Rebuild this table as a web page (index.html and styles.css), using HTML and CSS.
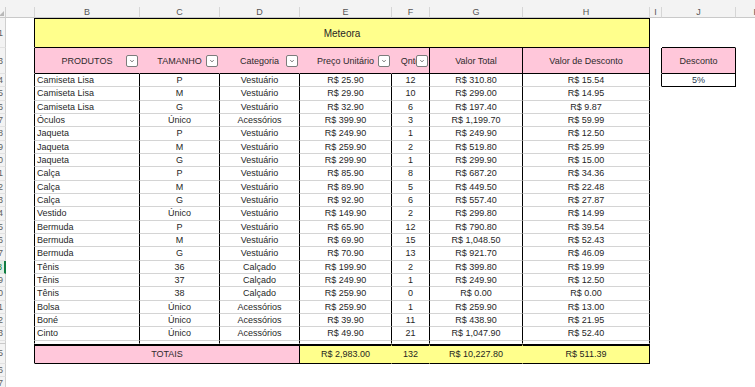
FILE: index.html
```html
<!DOCTYPE html>
<html lang="pt-BR">
<head>
<meta charset="utf-8">
<title>Meteora</title>
<link rel="stylesheet" href="styles.css">
</head>
<body>
<div class="sheet">
  <div class="topstrip"></div>
  <div class="row colhdr">
    <div class="corner"><span class="tri"></span></div>
    <div></div><div>B</div><div>C</div><div>D</div><div>E</div><div>F</div><div>G</div><div>H</div><div>I</div><div>J</div><div>K</div>
  </div>

  <div class="row r1">
    <div class="rh">1</div>
    <div class="a"></div>
    <div class="title">Meteora</div>
    <div></div>
    <div class="jtop"></div>
    <div></div>
  </div>

  <div class="row r3">
    <div class="rh">3</div>
    <div class="a"></div>
    <div class="hd fh"><span class="lbl">PRODUTOS</span><span class="flt"><svg viewBox="0 0 12 12" width="12" height="12"><path d="M4 5 L6 7 L8 5" fill="none" stroke="#505050" stroke-width="1"/></svg></span></div>
    <div class="hd fh"><span class="lbl">TAMANHO</span><span class="flt"><svg viewBox="0 0 12 12" width="12" height="12"><path d="M4 5 L6 7 L8 5" fill="none" stroke="#505050" stroke-width="1"/></svg></span></div>
    <div class="hd fh"><span class="lbl">Categoria</span><span class="flt"><svg viewBox="0 0 12 12" width="12" height="12"><path d="M4 5 L6 7 L8 5" fill="none" stroke="#505050" stroke-width="1"/></svg></span></div>
    <div class="hd fh"><span class="lbl">Preço Unitário</span><span class="flt"><svg viewBox="0 0 12 12" width="12" height="12"><path d="M4 5 L6 7 L8 5" fill="none" stroke="#505050" stroke-width="1"/></svg></span></div>
    <div class="hd fh bl"><span class="lbl">Qntd</span><span class="flt"><svg viewBox="0 0 12 12" width="12" height="12"><path d="M4 5 L6 7 L8 5" fill="none" stroke="#505050" stroke-width="1"/></svg></span></div>
    <div class="hd bl">Valor Total</div>
    <div class="hd bl">Valor de Desconto</div>
    <div class="a"></div>
    <div class="hd bl">Desconto</div>
    <div></div>
  </div>

  <div class="row data"><div class="rh">4</div><div class="a"></div><div class="d t">Camiseta Lisa</div><div class="d">P</div><div class="d">Vestuário</div><div class="d">R$ 25.90</div><div class="d">12</div><div class="d">R$ 310.80</div><div class="d">R$ 15.54</div><div class="a"></div><div class="pct">5%</div><div></div></div>
  <div class="row data"><div class="rh">5</div><div class="a"></div><div class="d t">Camiseta Lisa</div><div class="d">M</div><div class="d">Vestuário</div><div class="d">R$ 29.90</div><div class="d">10</div><div class="d">R$ 299.00</div><div class="d">R$ 14.95</div><div></div><div></div><div></div></div>
  <div class="row data"><div class="rh">6</div><div class="a"></div><div class="d t">Camiseta Lisa</div><div class="d">G</div><div class="d">Vestuário</div><div class="d">R$ 32.90</div><div class="d">6</div><div class="d">R$ 197.40</div><div class="d">R$ 9.87</div><div></div><div></div><div></div></div>
  <div class="row data"><div class="rh">7</div><div class="a"></div><div class="d t">Óculos</div><div class="d">Único</div><div class="d">Acessórios</div><div class="d">R$ 399.90</div><div class="d">3</div><div class="d">R$ 1,199.70</div><div class="d">R$ 59.99</div><div></div><div></div><div></div></div>
  <div class="row data"><div class="rh">8</div><div class="a"></div><div class="d t">Jaqueta</div><div class="d">P</div><div class="d">Vestuário</div><div class="d">R$ 249.90</div><div class="d">1</div><div class="d">R$ 249.90</div><div class="d">R$ 12.50</div><div></div><div></div><div></div></div>
  <div class="row data"><div class="rh">9</div><div class="a"></div><div class="d t">Jaqueta</div><div class="d">M</div><div class="d">Vestuário</div><div class="d">R$ 259.90</div><div class="d">2</div><div class="d">R$ 519.80</div><div class="d">R$ 25.99</div><div></div><div></div><div></div></div>
  <div class="row data"><div class="rh">10</div><div class="a"></div><div class="d t">Jaqueta</div><div class="d">G</div><div class="d">Vestuário</div><div class="d">R$ 299.90</div><div class="d">1</div><div class="d">R$ 299.90</div><div class="d">R$ 15.00</div><div></div><div></div><div></div></div>
  <div class="row data"><div class="rh">11</div><div class="a"></div><div class="d t">Calça</div><div class="d">P</div><div class="d">Vestuário</div><div class="d">R$ 85.90</div><div class="d">8</div><div class="d">R$ 687.20</div><div class="d">R$ 34.36</div><div></div><div></div><div></div></div>
  <div class="row data"><div class="rh">12</div><div class="a"></div><div class="d t">Calça</div><div class="d">M</div><div class="d">Vestuário</div><div class="d">R$ 89.90</div><div class="d">5</div><div class="d">R$ 449.50</div><div class="d">R$ 22.48</div><div></div><div></div><div></div></div>
  <div class="row data"><div class="rh">13</div><div class="a"></div><div class="d t">Calça</div><div class="d">G</div><div class="d">Vestuário</div><div class="d">R$ 92.90</div><div class="d">6</div><div class="d">R$ 557.40</div><div class="d">R$ 27.87</div><div></div><div></div><div></div></div>
  <div class="row data"><div class="rh">14</div><div class="a"></div><div class="d t">Vestido</div><div class="d">Único</div><div class="d">Vestuário</div><div class="d">R$ 149.90</div><div class="d">2</div><div class="d">R$ 299.80</div><div class="d">R$ 14.99</div><div></div><div></div><div></div></div>
  <div class="row data"><div class="rh">15</div><div class="a"></div><div class="d t">Bermuda</div><div class="d">P</div><div class="d">Vestuário</div><div class="d">R$ 65.90</div><div class="d">12</div><div class="d">R$ 790.80</div><div class="d">R$ 39.54</div><div></div><div></div><div></div></div>
  <div class="row data"><div class="rh">16</div><div class="a"></div><div class="d t">Bermuda</div><div class="d">M</div><div class="d">Vestuário</div><div class="d">R$ 69.90</div><div class="d">15</div><div class="d">R$ 1,048.50</div><div class="d">R$ 52.43</div><div></div><div></div><div></div></div>
  <div class="row data"><div class="rh">17</div><div class="a"></div><div class="d t">Bermuda</div><div class="d">G</div><div class="d">Vestuário</div><div class="d">R$ 70.90</div><div class="d">13</div><div class="d">R$ 921.70</div><div class="d">R$ 46.09</div><div></div><div></div><div></div></div>
  <div class="row data"><div class="rh sel">18</div><div class="a"></div><div class="d t">Tênis</div><div class="d">36</div><div class="d">Calçado</div><div class="d">R$ 199.90</div><div class="d">2</div><div class="d">R$ 399.80</div><div class="d">R$ 19.99</div><div></div><div></div><div></div></div>
  <div class="row data"><div class="rh">19</div><div class="a"></div><div class="d t">Tênis</div><div class="d">37</div><div class="d">Calçado</div><div class="d">R$ 249.90</div><div class="d">1</div><div class="d">R$ 249.90</div><div class="d">R$ 12.50</div><div></div><div></div><div></div></div>
  <div class="row data"><div class="rh">20</div><div class="a"></div><div class="d t">Tênis</div><div class="d">38</div><div class="d">Calçado</div><div class="d">R$ 259.90</div><div class="d">0</div><div class="d">R$ 0.00</div><div class="d">R$ 0.00</div><div></div><div></div><div></div></div>
  <div class="row data"><div class="rh">21</div><div class="a"></div><div class="d t">Bolsa</div><div class="d">Único</div><div class="d">Acessórios</div><div class="d">R$ 259.90</div><div class="d">1</div><div class="d">R$ 259.90</div><div class="d">R$ 13.00</div><div></div><div></div><div></div></div>
  <div class="row data"><div class="rh">22</div><div class="a"></div><div class="d t">Boné</div><div class="d">Único</div><div class="d">Acessórios</div><div class="d">R$ 39.90</div><div class="d">11</div><div class="d">R$ 438.90</div><div class="d">R$ 21.95</div><div></div><div></div><div></div></div>
  <div class="row data"><div class="rh">23</div><div class="a"></div><div class="d t">Cinto</div><div class="d">Único</div><div class="d">Acessórios</div><div class="d">R$ 49.90</div><div class="d">21</div><div class="d">R$ 1,047.90</div><div class="d">R$ 52.40</div><div></div><div></div><div></div></div>

  <div class="row gap"><div class="rh"></div><div class="a"></div><div class="v"></div><div class="v"></div><div class="v"></div><div class="v"></div><div class="v"></div><div class="v"></div><div class="v"></div><div></div><div></div><div></div></div>

  <div class="row tot">
    <div class="rh">25</div>
    <div class="a"></div>
    <div class="totlbl">TOTAIS</div>
    <div class="ty">R$ 2,983.00</div>
    <div class="ty">132</div>
    <div class="ty">R$ 10,227.80</div>
    <div class="ty last">R$ 511.39</div>
    <div></div><div></div><div></div>
  </div>

  <div class="row data"><div class="rh">26</div><div></div><div></div><div></div><div></div><div></div><div></div><div></div><div></div><div></div><div></div><div></div></div>
  <div class="row data"><div class="rh">27</div><div></div><div></div><div></div><div></div><div></div><div></div><div></div><div></div><div></div><div></div><div></div></div>
</div>
</body>
</html>
```

FILE: styles.css
```css
html, body {
  margin: 0;
  padding: 0;
  background: #ffffff;
  overflow: hidden;
}
body {
  width: 755px;
  height: 387px;
  font-family: "Liberation Sans", Arial, sans-serif;
  font-size: 9px;
  color: #1f1f1f;
}
.sheet {
  width: 778px;
}
.topstrip {
  height: 7px;
  background: #f3f3f3;
}
.row {
  display: grid;
  grid-template-columns: 6px 29px 105px 80px 80px 92px 38px 93px 127px 12px 74px 42px;
}
.row > div {
  box-sizing: border-box;
  border-right: 1px solid transparent;
  border-bottom: 1px solid transparent;
  display: flex;
  align-items: center;
  justify-content: center;
  white-space: nowrap;
  overflow: hidden;
  min-width: 0;
}

/* column headers */
.colhdr {
  height: 11px;
}
.colhdr > div {
  background: #f3f3f3;
  border-right: 1px solid #d6d6d6;
  border-bottom: 1px solid #c9c9c9;
  color: #555555;
  font-size: 9px;
}
.colhdr > .corner {
  border-right: 1px solid #cfcfcf;
  justify-content: flex-end;
  align-items: flex-end;
}
.tri {
  width: 0;
  height: 0;
  border-left: 5px solid transparent;
  border-bottom: 5px solid #b8b8b8;
  margin: 0 1px 1px 0;
}

/* row headers */
.row > .rh {
  background: #f3f3f3;
  border-right: 1px solid #cfcfcf;
  border-bottom: 1px solid #e2e2e2;
  color: #616161;
  justify-content: flex-end;
  padding-right: 2px;
  font-size: 9px;
}
.row > .rh.sel {
  background: #dfeee4;
  color: #107c41;
  border-right: 2px solid #107c41;
}

/* column A / I edge cells carrying the table's left border */
.row > .a {
  border-right: 1px solid #000000;
}

/* row 1 title */
.r1 {
  height: 30px;
}
.row > .title {
  grid-column: span 7;
  background: #ffff8c;
  border-top: 1px solid #000000;
  border-bottom: 1px solid #000000;
  border-right: 1px solid #000000;
  font-size: 10px;
  color: #262626;
}
.row > .jtop {
  border-bottom: 1px solid #000000;
}

/* row 3 headers */
.r3 {
  height: 26px;
}
.row > .hd {
  background: #ffc7da;
  border-bottom: 1px solid #000000;
  color: #2e2a2c;
}
.row > .hd.bl {
  border-right: 1px solid #000000;
}
.row > .fh {
  display: grid;
  grid-template-columns: 14px minmax(0, 1fr) 14px;
  align-items: center;
}
.lbl {
  grid-column: 2;
  justify-self: unsafe center;
  white-space: nowrap;
}
.flt {
  grid-column: 3;
  justify-self: end;
  margin-right: 1px;
  width: 12px;
  height: 12px;
  box-sizing: border-box;
  border: 1px solid #7c7c7c;
  border-radius: 2px;
  background: #ffffff;
  display: flex;
  align-items: center;
  justify-content: center;
}
.flt svg {
  display: block;
  width: 10px;
  height: 10px;
}

/* data rows */
.data {
  height: 13.333px;
}
.row > .d {
  border-right: 1px solid #000000;
  border-bottom: 1px solid #d4d4d4;
}
.row > .d.t {
  justify-content: flex-start;
  padding-left: 2px;
}
.row > .pct {
  border-right: 1px solid #000000;
  border-bottom: 1px solid #000000;
  color: #26374f;
}

/* hidden row 24 gap */
.gap {
  height: 3.333px;
}
.row > .v {
  border-right: 1px solid #000000;
}
.row.gap > .rh {
  border-bottom: 1px solid #c9c9c9;
}

/* totals */
.tot {
  height: 20px;
}
.row > .totlbl {
  grid-column: span 3;
  background: #ffc7da;
  border-top: 2px solid #000000;
  border-bottom: 1px solid #000000;
  border-right: 1px solid #000000;
  color: #2e2a2c;
}
.row > .ty {
  background: #ffff8c;
  border-top: 2px solid #000000;
  border-bottom: 1px solid #000000;
}
.row > .ty.last {
  border-right: 1px solid #000000;
}
```
